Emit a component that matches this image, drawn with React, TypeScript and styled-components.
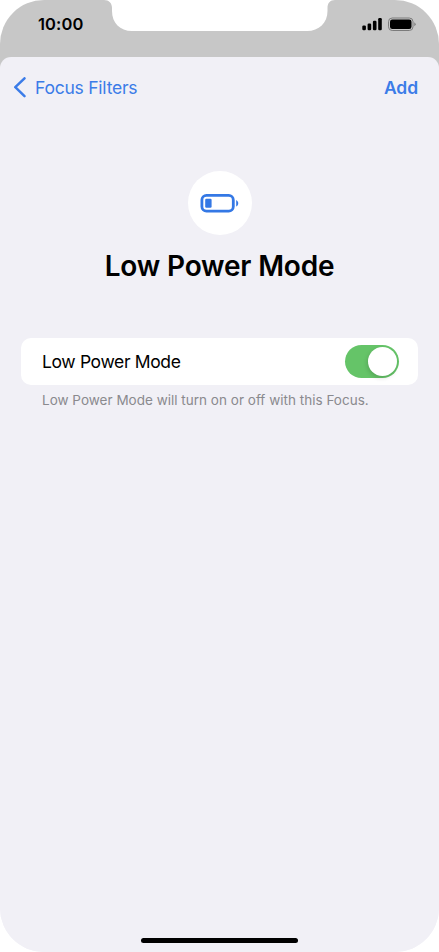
import React, { useState } from "react";
import styled, { createGlobalStyle } from "styled-components";

const GlobalStyle = createGlobalStyle`
  * { box-sizing: border-box; }
  body { margin: 0; background: #fff; }
  button { border: 0; padding: 0; background: none; font: inherit; letter-spacing: inherit; color: inherit; cursor: pointer; }
`;

const Phone = styled.div`
  position: relative;
  display: flex;
  flex-direction: column;
  width: 439px;
  height: 952px;
  overflow: hidden;
  border-radius: 44px;
  background: linear-gradient(#c7c7c7 100px, #f1f0f6 100px);
  font-family: Inter, "Liberation Sans", sans-serif;
  color: #000;
`;

const Notch = styled.svg`
  position: absolute;
  top: 0;
  left: 104px;
`;

const StatusBar = styled.header`
  display: flex;
  justify-content: space-between;
  align-items: center;
  height: 57px;
  padding: 0 23px 9px 38px;
`;

const Time = styled.span`
  font-size: 16.5px;
  font-weight: 600;
  line-height: 20px;
  letter-spacing: 0.1px;
`;

const StatusIcons = styled.div`
  display: flex;
  align-items: center;
  height: 20px;
`;

const Sheet = styled.main`
  display: flex;
  flex-direction: column;
  flex: 1;
  border-radius: 11px 11px 0 0;
  background: #f1f0f6;
`;

const NavBar = styled.nav`
  display: flex;
  justify-content: space-between;
  align-items: center;
  height: 61px;
  padding: 0 21px 0 13px;
  color: #3b7ce8;
  font-size: 17.5px;
  line-height: 22px;
  letter-spacing: -0.23px;
`;

const BackButton = styled.button`
  display: flex;
  align-items: center;
  gap: 8px;
`;

const AddButton = styled.button`
  && {
    font-weight: 600;
    letter-spacing: -0.1px;
  }
`;

const Hero = styled.section`
  display: flex;
  flex-direction: column;
  align-items: center;
  padding-top: 53px;
`;

const HeroIcon = styled.div`
  display: grid;
  place-items: center;
  width: 64px;
  height: 64px;
  border-radius: 50%;
  background: #fff;
`;

const Title = styled.h1`
  margin: 13px 0 0;
  font-size: 28px;
  font-weight: 600;
  line-height: 36px;
  letter-spacing: -0.18px;
`;

const Card = styled.div`
  display: flex;
  justify-content: space-between;
  align-items: center;
  height: 47px;
  margin: 54px 21px 0;
  padding: 0 19px 0 21px;
  border-radius: 10px;
  background: #fff;
`;

const CardLabel = styled.span`
  font-size: 17.5px;
  line-height: 22px;
  letter-spacing: -0.36px;
`;

const Track = styled.button<{ $on: boolean }>`
  && {
    display: flex;
    justify-content: ${(p) => (p.$on ? "flex-end" : "flex-start")};
    width: 54px;
    height: 33px;
    padding: 2px;
    border-radius: 17px;
    background: ${(p) => (p.$on ? "#65c468" : "#e9e9eb")};
  }
`;

const Knob = styled.span`
  width: 29px;
  height: 29px;
  border-radius: 50%;
  background: #fff;
  box-shadow: -1px 2px 4px rgba(0, 0, 0, 0.15);
`;

const Note = styled.p`
  margin: 6px 42px 0;
  color: #8a8a8e;
  font-size: 13.5px;
  line-height: 18px;
  letter-spacing: 0.01px;
  white-space: nowrap;
`;

const HomeBar = styled.div`
  width: 157px;
  height: 5px;
  margin: auto auto 9px;
  border-radius: 3px;
  background: #000;
`;

export default function App() {
  const [on, setOn] = useState(true);
  return (
    <>
      <GlobalStyle />
      <Phone>
        <Notch width="231" height="32" viewBox="0 0 231 32">
          <path
            d="M0 0 C5 0 8 3 8 8 V11 C8 23 16 31 28 31 H203 C215 31 223.500 23 223.500 11 V8 C223.500 3 226 0 231 0 Z"
            fill="#fff"
          />
        </Notch>
        <StatusBar>
          <Time>10:00</Time>
          <StatusIcons>
            <svg width="54" height="14" viewBox="0 0 54 14">
              <rect x="0.300" y="8.500" width="3.600" height="4.800" rx="1.200" />
              <rect x="5.600" y="6.500" width="3.600" height="6.800" rx="1.200" />
              <rect x="10.900" y="3.700" width="3.600" height="9.600" rx="1.200" />
              <rect x="16.200" y="1" width="3.600" height="12.300" rx="1.200" />
              <rect x="26.500" y="1" width="24.500" height="12.500" rx="3.700" fill="none" stroke="#7b7b7b" />
              <rect x="28" y="2.500" width="21.500" height="9.500" rx="2.300" />
              <path d="M52.300 5.200 Q55 7.200 52.300 9.200 Z" fill="#7b7b7b" />
            </svg>
          </StatusIcons>
        </StatusBar>
        <Sheet>
          <NavBar>
            <BackButton>
              <svg width="14" height="22" viewBox="0 0 14 22">
                <path d="M11.500 1.300 L2.300 10.200 L11.500 19.100" fill="none" stroke="#3b7ce8" strokeWidth="2.500" strokeLinecap="round" strokeLinejoin="round" />
              </svg>
              Focus Filters
            </BackButton>
            <AddButton>Add</AddButton>
          </NavBar>
          <Hero>
            <HeroIcon>
              <svg width="40" height="20" viewBox="0 0 40 20">
                <rect x="1.900" y="2.400" width="31.400" height="15.700" rx="4.600" fill="#fff" stroke="#3478e5" strokeWidth="2.800" />
                <rect x="5.200" y="5.800" width="6.400" height="9" rx="1.200" fill="#3478e5" />
                <path d="M36.200 6.900 C38.900 8.400 38.900 12 36.200 13.500 Z" fill="#3478e5" />
              </svg>
            </HeroIcon>
            <Title>Low Power Mode</Title>
          </Hero>
          <Card>
            <CardLabel>Low Power Mode</CardLabel>
            <Track $on={on} role="switch" aria-checked={on} aria-label="Low Power Mode" onClick={() => setOn(!on)}>
              <Knob />
            </Track>
          </Card>
          <Note>Low Power Mode will turn on or off with this Focus.</Note>
          <HomeBar />
        </Sheet>
      </Phone>
    </>
  );
}
